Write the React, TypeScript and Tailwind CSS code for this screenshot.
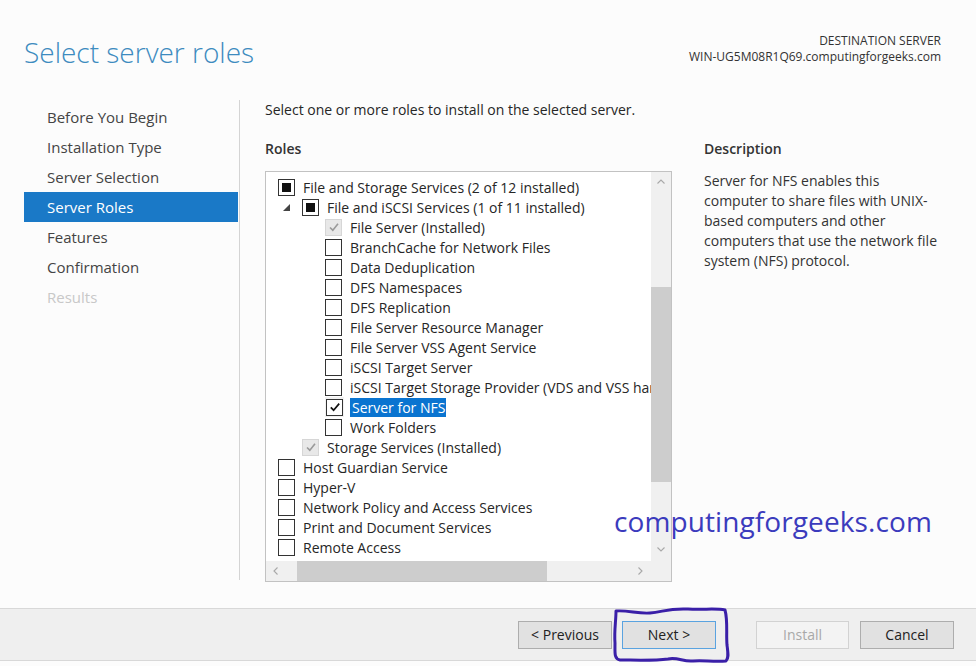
import React from "react";

const FONT = { fontFamily: '"Segoe UI", "Open Sans", "Noto Sans", sans-serif' };

type Kind = "ind" | "dis" | "off" | "on";

function Box({ kind }: { kind: Kind }) {
  if (kind === "dis") {
    return (
      <div className="w-[17px] h-[17px] border border-[#d6d6d6] bg-[#e8e8e8] flex items-center justify-center shrink-0">
        <svg width="12" height="12" viewBox="0 0 12 12">
          <path d="M2 6.5 L4.8 9.2 L10 2.8" fill="none" stroke="#9a9a9a" strokeWidth="1.6" />
        </svg>
      </div>
    );
  }
  return (
    <div className="w-[17px] h-[17px] border border-[#333333] bg-white flex items-center justify-center shrink-0">
      {kind === "ind" && <div className="w-[9px] h-[9px] bg-[#111111]" />}
      {kind === "on" && (
        <svg width="12" height="12" viewBox="0 0 12 12">
          <path d="M1.8 6.3 L4.6 9.2 L10.2 2.6" fill="none" stroke="#111111" strokeWidth="1.7" />
        </svg>
      )}
    </div>
  );
}

type Row = { level: 0 | 1 | 2; kind: Kind; text: string; tri?: boolean; sel?: boolean };

const rows: Row[] = [
  { level: 0, kind: "ind", text: "File and Storage Services (2 of 12 installed)" },
  { level: 1, kind: "ind", text: "File and iSCSI Services (1 of 11 installed)", tri: true },
  { level: 2, kind: "dis", text: "File Server (Installed)" },
  { level: 2, kind: "off", text: "BranchCache for Network Files" },
  { level: 2, kind: "off", text: "Data Deduplication" },
  { level: 2, kind: "off", text: "DFS Namespaces" },
  { level: 2, kind: "off", text: "DFS Replication" },
  { level: 2, kind: "off", text: "File Server Resource Manager" },
  { level: 2, kind: "off", text: "File Server VSS Agent Service" },
  { level: 2, kind: "off", text: "iSCSI Target Server" },
  { level: 2, kind: "off", text: "iSCSI Target Storage Provider (VDS and VSS hardware providers)" },
  { level: 2, kind: "on", text: "Server for NFS", sel: true },
  { level: 2, kind: "off", text: "Work Folders" },
  { level: 1, kind: "dis", text: "Storage Services (Installed)" },
  { level: 0, kind: "off", text: "Host Guardian Service" },
  { level: 0, kind: "off", text: "Hyper-V" },
  { level: 0, kind: "off", text: "Network Policy and Access Services" },
  { level: 0, kind: "off", text: "Print and Document Services" },
  { level: 0, kind: "off", text: "Remote Access" },
];

function RoleRow({ r }: { r: Row }) {
  const pad = r.level === 0 ? "pl-[12px]" : r.level === 1 ? "pl-[17px]" : "pl-[59px]";
  return (
    <div className={`h-[20px] flex items-center whitespace-nowrap ${pad}`}>
      {r.level === 1 && (
        <div className="w-[19px] h-[20px] flex items-center justify-start shrink-0">
          {r.tri && (
            <svg width="7" height="7" viewBox="0 0 7 7">
              <polygon points="7,0 7,7 0,7" fill="#444444" />
            </svg>
          )}
        </div>
      )}
      <div className={r.sel ? "h-[20px] flex items-center px-[1px] bg-[#f2f2f2]" : "flex items-center"}>
        <Box kind={r.kind} />
      </div>
      <span
        className={
          r.sel
            ? "ml-[6px] pl-[2px] pr-[1px] h-[19px] leading-[19px] bg-[#0a74d0] text-white"
            : "ml-[8px] text-[#262626]"
        }
      >
        {r.text}
      </span>
    </div>
  );
}

function Chevron({ d }: { d: string }) {
  return (
    <svg width="10" height="10" viewBox="0 0 10 10">
      <path d={d} fill="none" stroke="#a8a8a8" strokeWidth="1.1" />
    </svg>
  );
}

const navItems = [
  "Before You Begin",
  "Installation Type",
  "Server Selection",
  "Server Roles",
  "Features",
  "Confirmation",
  "Results",
];

export default function App() {
  return (
    <div className="w-[976px] h-[666px] bg-[#fcfcfc] relative overflow-hidden flex flex-col" style={FONT}>
      {/* header */}
      <div className="h-[100px] flex justify-between">
        <div className="pl-[24px] pt-[32px] text-[28px] font-light text-[#3d8bbf] leading-[40px]">
          Select server roles
        </div>
        <div className="pr-[35px] pt-[33px] text-right text-[12px] leading-[16px] text-[#333333]">
          <div>DESTINATION SERVER</div>
          <div>WIN-UG5M08R1Q69.computingforgeeks.com</div>
        </div>
      </div>

      {/* main */}
      <div className="flex h-[508px]">
        {/* nav */}
        <div className="w-[240px] h-[480px] border-r border-[#d4d4d4] pl-[24px] pt-[2px]">
          {navItems.map((n, i) => (
            <div
              key={n}
              className={
                i === 3
                  ? "w-[214px] h-[30px] leading-[30px] pl-[23px] text-[15px] bg-[#1a79c7] text-white"
                  : i === 6
                  ? "w-[214px] h-[30px] leading-[30px] pl-[23px] text-[15px] text-[#c8c8c8]"
                  : "w-[214px] h-[30px] leading-[30px] pl-[23px] text-[15px] text-[#444444]"
              }
            >
              {n}
            </div>
          ))}
        </div>

        {/* content */}
        <div className="pl-[25px] flex flex-col text-[14px] text-[#262626]">
          <div className="h-[20px] leading-[20px]">Select one or more roles to install on the selected server.</div>
          <div className="flex">
            <div className="w-[407px] flex flex-col">
              <div className="mt-[19px] h-[20px] leading-[20px] font-semibold text-[#333333]">Roles</div>
              <div className="mt-[12px] h-[411px] border border-[#c2c2c2] bg-white flex">
                <div className="w-[385px] flex flex-col">
                  <div className="h-[384px] overflow-hidden pt-[5px]">
                    {rows.map((r) => (
                      <RoleRow key={r.text} r={r} />
                    ))}
                  </div>
                  <div className="mt-[5px] h-[20px] bg-[#f0f0f0] flex items-center">
                    <div className="w-[20px] flex justify-center">
                      <Chevron d="M6.5 1.5 L3 5 L6.5 8.5" />
                    </div>
                    <div className="ml-[11px] w-[250px] h-[20px] bg-[#cdcdcd]" />
                    <div className="flex-1 flex justify-end pr-[6px]">
                      <Chevron d="M3.5 1.5 L7 5 L3.5 8.5" />
                    </div>
                  </div>
                </div>
                <div className="w-[20px] flex flex-col bg-[#f0f0f0]">
                  <div className="h-[115px] flex justify-center pt-[5px]">
                    <Chevron d="M1.5 6.5 L5 3 L8.5 6.5" />
                  </div>
                  <div className="h-[195px] bg-[#cdcdcd]" />
                  <div className="h-[79px] flex justify-center items-end pb-[7px]">
                    <Chevron d="M1.5 3.5 L5 7 L8.5 3.5" />
                  </div>
                  <div className="flex-1" />
                </div>
              </div>
            </div>
            <div className="ml-[32px] w-[250px] flex flex-col">
              <div className="mt-[19px] h-[20px] leading-[20px] font-semibold text-[#333333]">Description</div>
              <div className="mt-[12px] leading-[20px] text-[#333333]">
                <div>Server for NFS enables this</div>
                <div>computer to share files with UNIX-</div>
                <div>based computers and other</div>
                <div>computers that use the network file</div>
                <div>system (NFS) protocol.</div>
              </div>
            </div>
          </div>
        </div>
      </div>

      {/* footer */}
      <div className="h-[53px] bg-[#efefef] border-t border-b border-[#d8d8d8] flex items-center justify-end pr-[22px] text-[14px]">
        <button className="w-[94px] h-[28px] border border-[#adadad] bg-[#e1e1e1] text-[#222222]">&lt; Previous</button>
        <button className="ml-[10px] w-[94px] h-[28px] border border-[#5aa3e0] bg-[#e1e1e1] text-[#222222]">Next &gt;</button>
        <button className="ml-[40px] w-[93px] h-[28px] border border-[#d2d2d2] bg-[#f3f3f3] text-[#a8a8a8]">Install</button>
        <button className="ml-[11px] w-[94px] h-[28px] border border-[#adadad] bg-[#e1e1e1] text-[#222222]">Cancel</button>
      </div>

      {/* watermark */}
      <div
        className="absolute left-[614px] top-[501px] text-[28px] leading-[40px] text-[#3b3bbd] whitespace-nowrap tracking-[0.1px]"
        style={{ fontFamily: '"Open Sans", "Noto Sans", sans-serif' }}
      >
        computingforgeeks.com
      </div>

      {/* hand-drawn circle */}
      <svg className="absolute left-[608px] top-[603px]" width="126" height="63" viewBox="0 0 126 63">
        <path
          d="M8 8 C 20 7, 30 11, 42 10 C 55 9, 60 5, 80 6 C 95 7, 108 5, 117 7 C 120 18, 118 30, 119 42 C 120 50, 121 55, 118 58 C 105 59, 95 57, 85 58 C 75 59, 70 54, 60 56 C 45 58, 25 57, 12 57 C 6 56, 7 50, 7 40 C 6 28, 8 18, 8 8 Z"
          fill="none"
          stroke="#3a1fa8"
          strokeWidth="3"
          strokeLinejoin="round"
        />
      </svg>
    </div>
  );
}
